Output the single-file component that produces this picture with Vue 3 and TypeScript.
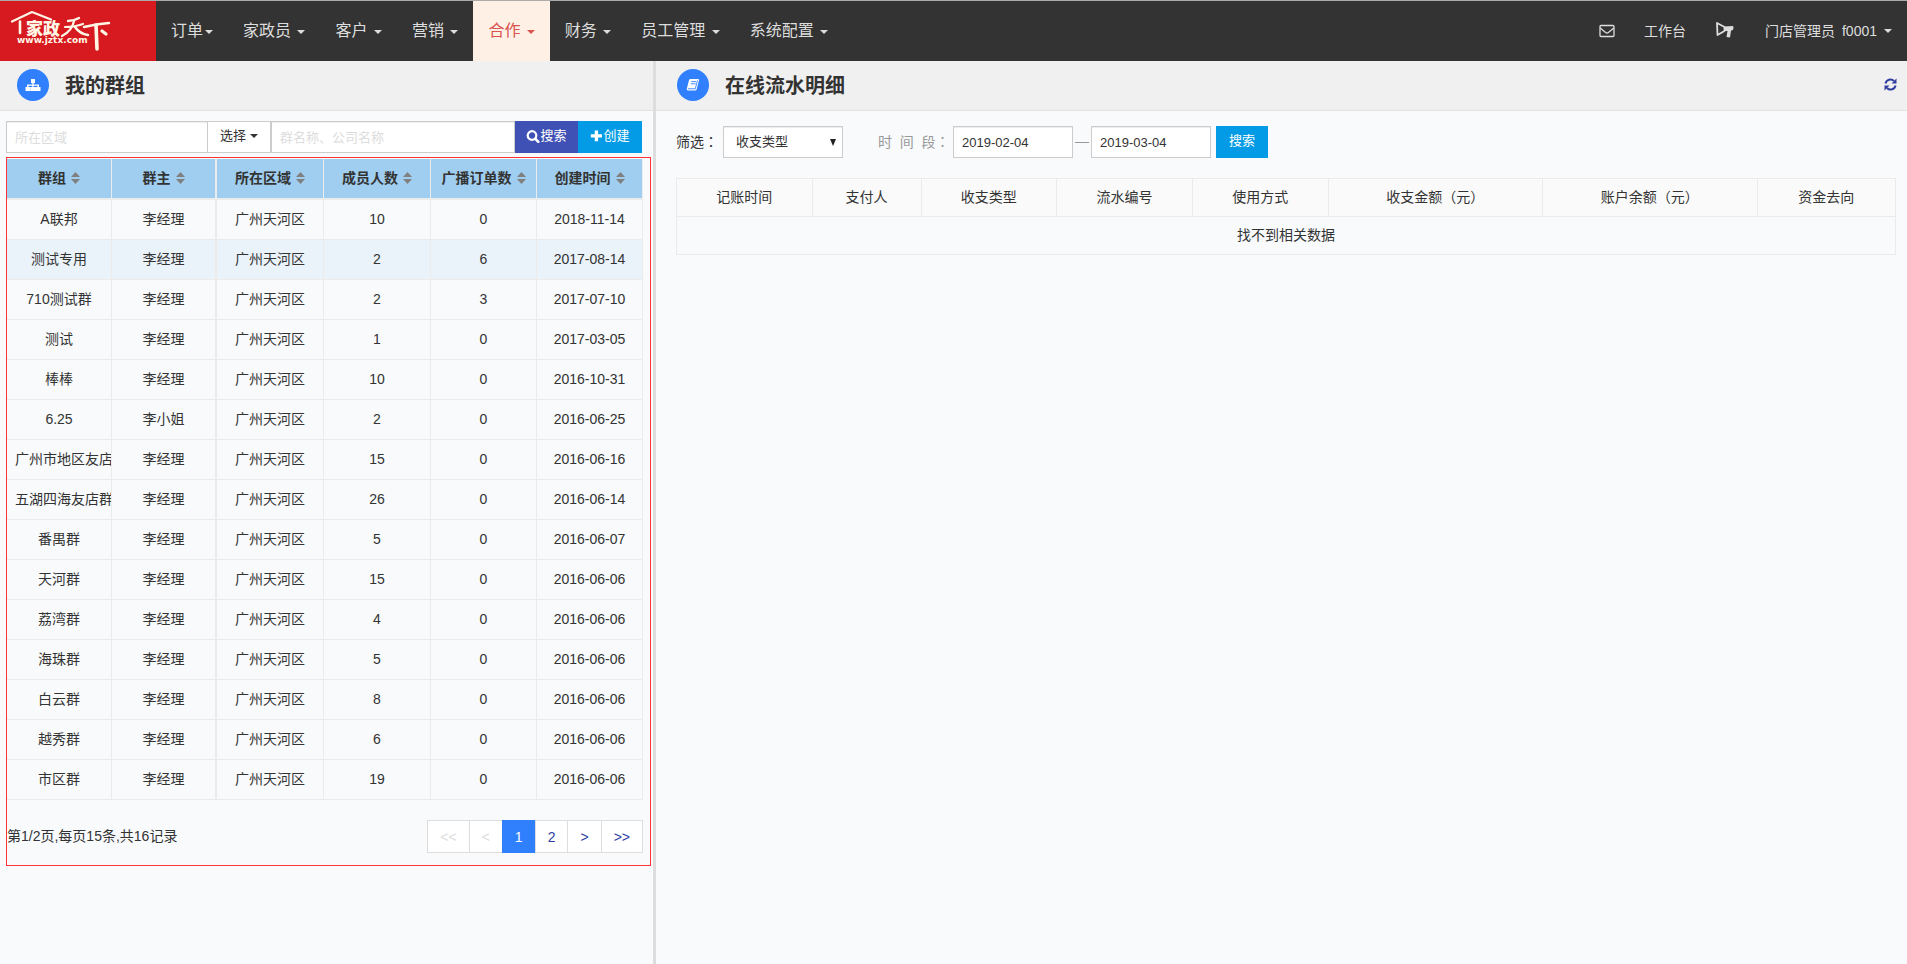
<script setup lang="ts">
interface NavItem { label: string; active?: boolean }
interface Group { name: string; owner: string; members: number; orders: number; date: string; hovered?: boolean }

const nav: NavItem[] = [
  { label: '订单' },
  { label: '家政员 ' },
  { label: '客户 ' },
  { label: '营销 ' },
  { label: '合作 ', active: true },
  { label: '财务 ' },
  { label: '员工管理 ' },
  { label: '系统配置 ' },
]

const groupColumns: string[] = ['群组', '群主', '所在区域', '成员人数', '广播订单数', '创建时间']

const groups: Group[] = [
  { name: 'A联邦', owner: '李经理', members: 10, orders: 0, date: '2018-11-14' },
  { name: '测试专用', owner: '李经理', members: 2, orders: 6, date: '2017-08-14', hovered: true },
  { name: '710测试群', owner: '李经理', members: 2, orders: 3, date: '2017-07-10' },
  { name: '测试', owner: '李经理', members: 1, orders: 0, date: '2017-03-05' },
  { name: '棒棒', owner: '李经理', members: 10, orders: 0, date: '2016-10-31' },
  { name: '6.25', owner: '李小姐', members: 2, orders: 0, date: '2016-06-25' },
  { name: '广州市地区友店', owner: '李经理', members: 15, orders: 0, date: '2016-06-16' },
  { name: '五湖四海友店群', owner: '李经理', members: 26, orders: 0, date: '2016-06-14' },
  { name: '番禺群', owner: '李经理', members: 5, orders: 0, date: '2016-06-07' },
  { name: '天河群', owner: '李经理', members: 15, orders: 0, date: '2016-06-06' },
  { name: '荔湾群', owner: '李经理', members: 4, orders: 0, date: '2016-06-06' },
  { name: '海珠群', owner: '李经理', members: 5, orders: 0, date: '2016-06-06' },
  { name: '白云群', owner: '李经理', members: 8, orders: 0, date: '2016-06-06' },
  { name: '越秀群', owner: '李经理', members: 6, orders: 0, date: '2016-06-06' },
  { name: '市区群', owner: '李经理', members: 19, orders: 0, date: '2016-06-06' },
]

const pages: { text: string; state?: string }[] = [
  { text: '<<', state: 'disabled' },
  { text: '<', state: 'disabled' },
  { text: '1', state: 'current' },
  { text: '2' },
  { text: '>' },
  { text: '>>' },
]

const flowColumns: string[] = ['记账时间', '支付人', '收支类型', '流水编号', '使用方式', '收支金额（元）', '账户余额（元）', '资金去向']
</script>

<template>
  <div class="page">
    <header class="navbar">
      <a class="brand" href="#" aria-label="家政天下">
        <svg viewBox="0 0 156 60" width="156" height="60">
          <g fill="none" stroke="#fff6e6" stroke-linecap="round" stroke-linejoin="round">
            <path d="M12 20.500 L32 11 L51 18.500" stroke-width="2.2" />
            <path d="M20 20.500 V32" stroke-width="2.600" />
            <path d="M68 20 Q74 20 79 17" stroke-width="2.4" />
            <path d="M65 26 Q75 26 83 23" stroke-width="2.2" />
            <path d="M74 20 Q72 30 62 35" stroke-width="2.2" />
            <path d="M75 26 Q80 33 88 34" stroke-width="2.6" />
            <path d="M84 26 Q96 23 109 22" stroke-width="2.4" />
            <path d="M96 24 L97 48" stroke-width="3.6" />
            <path d="M102 30 L106 33" stroke-width="3.2" />
          </g>
          <text x="26" y="34" class="brand-name">家政</text>
          <text x="17" y="42" class="brand-site">www.jztx.com</text>
        </svg>
      </a>
      <nav class="menu">
        <a v-for="item in nav" :key="item.label" href="#" :class="{ active: item.active }">{{ item.label }}<i class="caret"></i></a>
      </nav>
      <div class="tools">
        <a href="#" aria-label="消息">
          <svg width="16" height="14" viewBox="0 0 16 14" fill="none" stroke="currentColor" stroke-width="1.3"><rect x="1" y="1.5" width="14" height="11" rx="1" /><path d="M1.2 4 L6.600 8.500 Q8 9.500 9.400 8.500 L14.800 4" /></svg>
        </a>
        <a href="#">工作台</a>
        <a href="#" aria-label="公告">
          <svg width="19" height="20" viewBox="0 0 19 20"><path d="M2 2 L9.500 6 V10 L2.500 14 Z" fill="none" stroke="currentColor" stroke-width="1.800" stroke-linejoin="round" /><path d="M9 5.500 L17.500 5 Q18.800 5 18.500 7 Q18.300 9.500 16.500 9.500 H16 L15 16.500 L11.500 16 L12.500 10 H9 Z" fill="currentColor" /></svg>
        </a>
        <a href="#" class="user"><span>门店管理员</span><span>f0001</span><i class="caret"></i></a>
      </div>
    </header>

    <main class="panels">
      <section class="panel groups">
        <div class="panel-head">
          <span class="badge">
            <svg width="16" height="14" viewBox="0 0 16 14" fill="#fff"><path d="M6 1h4v4H8.600v1.500H14V9h1.500v4h-5V9h2V7.800H8.600V9h2v4H5.500V9h1.800V7.800H3.500V9h1.800v4H.5V9H2V6.500h5.300V5H6z" /></svg>
          </span>
          <h1>我的群组</h1>
        </div>
        <form class="search" @submit.prevent>
          <input class="area" type="text" placeholder="所在区域" aria-label="所在区域" />
          <button class="choose" type="button">选择<i class="caret"></i></button>
          <input class="keyword" type="text" placeholder="群名称、公司名称" aria-label="群名称、公司名称" />
          <button class="indigo" type="submit"><svg width="14" height="13" viewBox="0 0 14 13" fill="none" stroke="currentColor"><circle cx="6" cy="5.500" r="4.300" stroke-width="2.200" /><path d="M9.200 8.700 L12.300 11.800" stroke-width="2.600" stroke-linecap="round" /></svg>搜索</button>
          <button class="sky" type="button"><svg width="13" height="12" viewBox="0 0 13 12" fill="currentColor"><path d="M4.700 .5h3.400v3.700H12v3.400H8.100V11.300H4.700V7.600H.8V4.200h3.900z" /></svg>创建</button>
        </form>
        <div class="outlined">
          <table class="group-table">
            <colgroup><col v-for="(c, i) in groupColumns" :key="c" :class="'g' + i" /></colgroup>
            <thead>
              <tr>
                <th v-for="c in groupColumns" :key="c">{{ c }}<svg class="sort" width="9" height="12" viewBox="0 0 9 12" fill="#808080"><path d="M4.500 0 L9 5 H0z M0 7 H9 L4.500 12z" /></svg></th>
              </tr>
            </thead>
            <tbody>
              <tr v-for="g in groups" :key="g.name" :class="{ hovered: g.hovered }">
                <td>{{ g.name }}</td>
                <td>{{ g.owner }}</td>
                <td>广州天河区</td>
                <td>{{ g.members }}</td>
                <td>{{ g.orders }}</td>
                <td>{{ g.date }}</td>
              </tr>
            </tbody>
          </table>
          <div class="pager">
            <span class="summary">第1/2页,每页15条,共16记录</span>
            <div class="pages">
              <button v-for="p in pages" :key="p.text" type="button" :class="p.state" :disabled="p.state === 'disabled'">{{ p.text }}</button>
            </div>
          </div>
        </div>
      </section>

      <section class="panel flow">
        <div class="panel-head">
          <span class="badge">
            <svg width="14" height="14" viewBox="0 0 14 14"><path d="M4.500 1 H12 Q13.300 1 13 2.300 L10.800 11 Q10.500 12.500 9 12.500 H2 Q.4 12.500 .8 10.800 L3 2.200 Q3.300 1 4.500 1z" fill="#fff" /><path d="M5.200 3.600 H10.200 M4.700 5.800 H9.700 M2 10.800 H9.300 L11.500 2.500" fill="none" stroke="#3080fe" stroke-width=".9" /></svg>
          </span>
          <h1>在线流水明细</h1>
          <button class="refresh" type="button" aria-label="刷新">
            <svg width="13" height="13" viewBox="0 0 13 13"><g fill="none" stroke="currentColor" stroke-width="2"><path d="M1.500 5.500 A5 5 0 0 1 10 3" /><path d="M11.500 7.500 A5 5 0 0 1 3 10" /></g><path d="M12.500 .5 V5.500 H7.500z M.5 12.500 V7.500 H5.500z" fill="currentColor" /></svg>
          </button>
        </div>
        <form class="filters" @submit.prevent>
          <label class="type-label" for="type">筛选<span class="colon">：</span></label>
          <div class="select-box">
            <select id="type"><option>收支类型</option></select>
            <svg width="6" height="7" viewBox="0 0 6 7"><path d="M0 0H6L3 7z" fill="#222" /></svg>
          </div>
          <label class="range-label" for="from">时&nbsp;&nbsp;间&nbsp;&nbsp;段<span class="colon">：</span></label>
          <input id="from" type="text" value="2019-02-04" />
          <span class="dash"></span>
          <input type="text" value="2019-03-04" aria-label="结束日期" />
          <button class="sky" type="submit">搜索</button>
        </form>
        <table class="flow-table">
          <colgroup><col v-for="(c, i) in flowColumns" :key="c" :class="'f' + i" /></colgroup>
          <thead><tr><th v-for="c in flowColumns" :key="c">{{ c }}</th></tr></thead>
          <tbody><tr><td :colspan="flowColumns.length">找不到相关数据</td></tr></tbody>
        </table>
      </section>
    </main>
  </div>
</template>

<style>
body { background: #f8fafc; }
</style>

<style scoped>
* { box-sizing: border-box; }
.page {
  display: flex;
  flex-direction: column;
  min-height: 100vh;
  color: #333;
  background: #f8fafc;
  font: 14px/20px "Liberation Sans", "Noto Sans CJK SC", sans-serif;
}
a { color: inherit; text-decoration: none; }
button, input, select { font: inherit; color: inherit; border-radius: 0; margin: 0; }
button { cursor: pointer; }
.caret {
  display: inline-block;
  border: 4px solid transparent;
  border-top-color: currentColor;
  border-bottom: 0;
  vertical-align: middle;
}
.navbar {
  display: flex;
  height: 61px;
  border-top: 1px solid #aaa;
  background: #333;
  color: #ddd;
}
.brand { width: 156px; background: #d71920; }
.brand svg { display: block; }
.brand-name { font: 900 17px "Noto Sans CJK SC", sans-serif; fill: #fff6e6; }
.brand-site { font: bold 9px "DejaVu Sans", sans-serif; fill: #fff6e6; }
.menu { display: flex; font-size: 16px; }
.menu a { padding: 0 15px; line-height: 60px; white-space: nowrap; }
.menu .caret { margin-left: 2px; }
.menu .active { background: #fff0e6; color: #d9534f; }
.tools { display: flex; align-items: center; margin-left: auto; padding-right: 15px; }
.tools a { display: flex; align-items: center; margin-left: 29px; }
.tools svg { display: block; }
.tools .user { gap: 7px; margin-left: 31px; }

.panels { display: flex; flex: 1; }
.groups { width: 656px; flex: none; border-right: 3px solid #ddd; }
.flow { flex: 1; min-width: 0; }
.panel-head {
  display: flex;
  align-items: center;
  gap: 16px;
  height: 50px;
  padding: 0 17px;
  background: #f0f0f0;
  border-bottom: 1px solid #e2e2e2;
}
.flow .panel-head { padding: 0 10px 0 21px; }
.badge {
  display: flex;
  align-items: center;
  justify-content: center;
  width: 32px;
  height: 32px;
  margin-bottom: 1px;
  border-radius: 50%;
  background: #3080fe;
}
h1 { margin: 0; font-size: 20px; line-height: 30px; font-weight: bold; }
.refresh { margin-left: auto; padding: 0 0 2px; border: 0; background: none; color: #303f9f; }
.refresh svg { display: block; }

input { height: 32px; padding: 0 8px; border: 1px solid #ccc; background: #fff; box-shadow: inset 0 1px 1px rgba(0, 0, 0, .075); outline: 0; }
input::placeholder { color: #ddd; opacity: 1; }
.search { display: flex; padding: 10px 11px 4px 6px; font-size: 13px; }
.search input { min-width: 0; }
.search button { flex: none; padding-bottom: 2px; }
.area { flex: 202 1 202px; }
.keyword { flex: 244 1 244px; }
.choose { display: flex; align-items: center; justify-content: center; gap: 4px; width: 63px; border: 1px solid #ccc; border-left: 0; background: #fff; padding: 0; }
.indigo, .sky { display: flex; align-items: center; justify-content: center; height: 32px; padding: 0; border: 0; color: #fff; }
.indigo { width: 63px; background: #3f51b5; }
.sky { width: 64px; background: #039be5; }

.outlined { margin: 0 2px 0 6px; border: 1px solid #f33; padding: 0 7px 12px 0; }
table { width: 100%; table-layout: fixed; border-collapse: separate; border-spacing: 0; text-align: center; }
.group-table th, .group-table td {
  height: 40px;
  padding: 0 8px 2px;
  border-right: 1px solid #ebebeb;
  border-bottom: 1px solid #ebebeb;
  overflow: hidden;
  white-space: nowrap;
}
.group-table th { height: 42px; padding: 0 0 1px; border-top: 1px solid #f8fafc; border-bottom-width: 2px; background: #9fcef0; background-clip: padding-box; }
.group-table th:nth-child(2), .group-table td:nth-child(2) { border-right-width: 2px; }
.sort { margin-left: 5px; vertical-align: -1px; }
.hovered { background: #eaf2fa; }
.g0, .g1 { width: 105px; }
.g2, .g3 { width: 107px; }
.pager { display: flex; justify-content: space-between; align-items: center; padding-top: 20px; }
.summary { padding-bottom: 2px; }
.pages { display: flex; }
.pages button { height: 33px; padding: 0 12px; margin-left: -1px; border: 1px solid #ddd; background: #fff; color: #303f9f; }
.pages .disabled { color: #ddd; }
.pages .current { background: #3080fe; border-color: #3080fe; color: #fff; }

.filters { display: flex; align-items: center; padding: 15px 20px 20px; font-size: 13px; }
.filters label { padding-bottom: 2px; font-size: 14px; white-space: nowrap; }
.colon { font-family: "Noto Sans CJK TC", sans-serif; }
.type-label { width: 47px; }
.select-box { display: grid; align-items: center; width: 120px; height: 32px; }
.select-box select { grid-area: 1 / 1; width: 100%; height: 32px; padding: 0 12px; border: 1px solid #ccc; background: #fff; appearance: none; box-shadow: inset 0 1px 1px rgba(0, 0, 0, .075); }
.select-box svg { grid-area: 1 / 1; justify-self: end; margin-right: 7px; pointer-events: none; }
.range-label { width: 75px; margin-left: 35px; color: #999; }
.filters input { width: 120px; }
.dash { width: 14px; height: 1px; margin: 0 2px; background: #999; }
.filters .sky { width: 52px; margin-left: 5px; padding-bottom: 2px; }
.flow-table { width: auto; min-width: calc(100% - 31px); margin: 0 11px 0 20px; border-top: 1px solid #ebebeb; border-left: 1px solid #ebebeb; }
.flow-table th, .flow-table td { height: 38px; padding: 0 0 2px; border-right: 1px solid #ebebeb; border-bottom: 1px solid #ebebeb; font-weight: normal; }
.flow-table th { background: #fafafa; }
.f0, .f2, .f3, .f4 { width: 11.130%; }
.f1 { width: 8.930%; }
.f5, .f6 { width: 17.600%; }
</style>
